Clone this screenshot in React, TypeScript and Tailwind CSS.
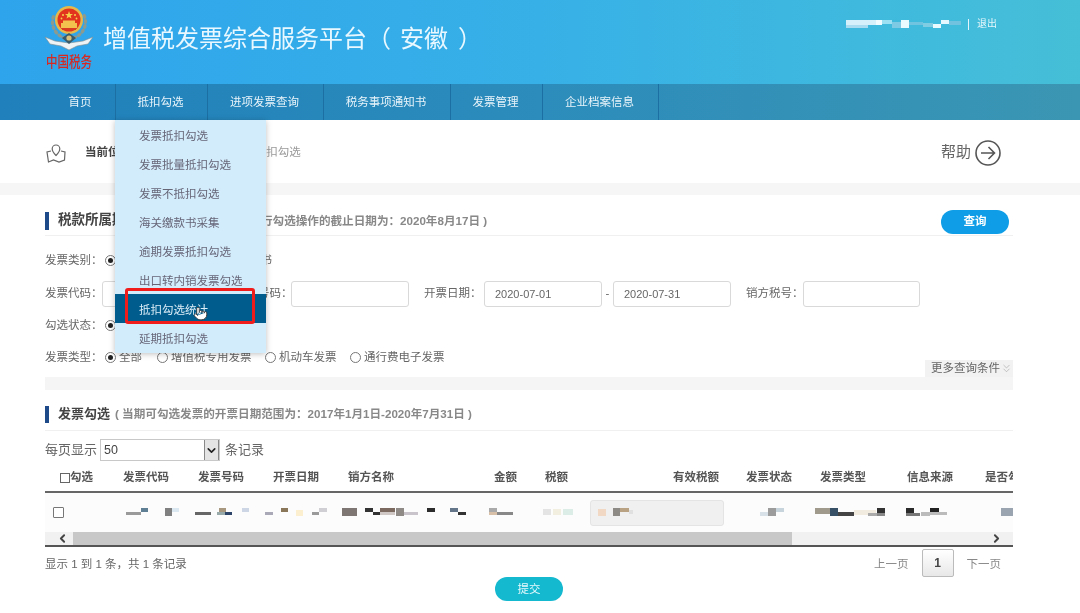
import React from "react";
import { Pointer, ChevronDown, ChevronLeft, ChevronRight, ChevronsDown } from "lucide-react";

type Block = [number, number, number, number, string];

function Mosaic({ w, h = 10, blocks, className = "" }: { w: number; h?: number; blocks: Block[]; className?: string }) {
  return (
    <svg width={w} height={h} viewBox={`0 0 ${w} ${h}`} className={"shrink-0 " + className}>
      {blocks.map((b, i) => (
        <rect key={i} x={b[0]} y={b[1]} width={b[2]} height={b[3]} fill={b[4]} />
      ))}
    </svg>
  );
}

function Emblem() {
  const wreath = [];
  for (let a = 70; a <= 290; a += 18) {
    const r = (a * Math.PI) / 180;
    const x = 24 + 16.5 * Math.sin(r);
    const y = 17 - 16.5 * Math.cos(r);
    wreath.push(<ellipse key={a} cx={x} cy={y} rx="2.6" ry="1.7" fill="#8d9a8e" transform={`rotate(${a} ${x} ${y})`} />);
  }
  return (
    <svg width="48" height="46" viewBox="0 0 48 46" className="block">
      {wreath}
      <circle cx="24" cy="15" r="14" fill="#e7b84a" />
      <circle cx="24" cy="15" r="11.5" fill="#e2331f" />
      <polygon points="24,6 25,9 28,9 25.6,10.800 26.500,13.600 24,11.900 21.500,13.600 22.400,10.800 20,9 23,9" fill="#f6d24c" />
      <circle cx="18" cy="10" r="1" fill="#f6d24c" />
      <circle cx="30" cy="10" r="1" fill="#f6d24c" />
      <circle cx="16.500" cy="13.500" r="0.9" fill="#f6d24c" />
      <circle cx="31.500" cy="13.500" r="0.9" fill="#f6d24c" />
      <rect x="16" y="18" width="16" height="5" fill="#f2c14e" />
      <rect x="18" y="15.500" width="12" height="2.500" fill="#f2c14e" />
      <rect x="17" y="23" width="14" height="2" fill="#d83a22" />
      <path d="M24 38 L10 36 L0 32 L5 39 L16 41 L24 45 L32 41 L43 39 L48 32 L38 36 Z" fill="#eef3f5" stroke="#7f8c8f" strokeWidth="0.6" />
      <path d="M17 33 L24 28 L31 33 L24 39 Z" fill="#3a5a6a" />
      <circle cx="24" cy="33" r="2.600" fill="#d9c07a" />
    </svg>
  );
}

function Radio({ on = false }: { on?: boolean }) {
  return (
    <span className="flex h-[11px] w-[11px] shrink-0 items-center justify-center rounded-full border border-[#777] bg-white">
      {on && <span className="h-[5px] w-[5px] rounded-full bg-[#222]" />}
    </span>
  );
}

function Field({ w, value = "" }: { w: string; value?: string }) {
  return (
    <div className={`flex h-[26px] items-center rounded-[3px] border border-[#d9d9d9] bg-white pl-[10px] text-[11px] text-[#666] ${w}`}>{value}</div>
  );
}

const navItems: [string, string][] = [
  ["首页", "w-[71px]"],
  ["抵扣勾选", "w-[92px] pr-[2px]"],
  ["进项发票查询", "w-[116px] pr-[2px]"],
  ["税务事项通知书", "w-[127px] pr-[2px]"],
  ["发票管理", "w-[92px] pr-[2px]"],
  ["企业档案信息", "w-[116px] pr-[2px]"],
];

const menuItems = ["发票抵扣勾选", "发票批量抵扣勾选", "发票不抵扣勾选", "海关缴款书采集", "逾期发票抵扣勾选", "出口转内销发票勾选", "抵扣勾选统计", "延期抵扣勾选"];

const heads: [string, string][] = [
  ["发票代码", "w-[75px]"],
  ["发票号码", "w-[75px]"],
  ["开票日期", "w-[75px]"],
  ["销方名称", "w-[146px]"],
  ["金额", "w-[51px]"],
  ["税额", "w-[128px]"],
  ["有效税额", "w-[73px]"],
  ["发票状态", "w-[74px]"],
  ["发票类型", "w-[87px]"],
  ["信息来源", "w-[78px]"],
  ["是否勾", "w-[30px]"],
];

export default function App() {
  return (
    <div className="relative h-[613px] w-[1080px] overflow-hidden bg-white font-['Liberation_Sans','Noto_Sans_CJK_SC',sans-serif] text-[11.5px] text-[#666] blur-[0.6px]">
      {/* header */}
      <header className="flex h-[84px] items-start bg-gradient-to-r from-[#2ea4ec] via-[#37b0e7] to-[#45bfd7] pl-[45px] pr-[83px]">
        <div className="mt-[5px] flex w-[58px] shrink-0 flex-col">
          <Emblem />
          <span className="mt-[2px] origin-top scale-y-125 whitespace-nowrap pl-[1px] text-[11.5px] font-medium leading-[14px] text-[#d8281f]">中国税务</span>
        </div>
        <h1 className="mt-[20px] whitespace-nowrap font-['Noto_Sans_CJK_SC',sans-serif] text-[24px] font-normal leading-[34px] text-[#e9f8ff]">
          增值税发票综合服务平台（<span className="ml-[9px] mr-[10px]">安徽</span>）
        </h1>
        <div className="ml-auto mt-[17px] flex items-center text-[10px] leading-[14px] text-[#e4f6fb]">
          <Mosaic
            w={115}
            h={9}
            blocks={[
              [0, 0, 30, 5, "#d6f0fb"],
              [0, 5, 22, 3, "#a9dcf1"],
              [30, 0, 6, 5, "#f0fbff"],
              [36, 0, 10, 4, "#9be0f3"],
              [46, 2, 9, 6, "#7dcae5"],
              [55, 0, 8, 8, "#e9fbff"],
              [63, 2, 14, 3, "#71c4e0"],
              [77, 3, 10, 4, "#7fcde2"],
              [87, 4, 8, 4, "#e8fbff"],
              [95, 0, 8, 4, "#e3f9ff"],
              [103, 1, 12, 4, "#71c2df"],
            ]}
          />
          <span className="ml-[7px] mr-[8px] h-[11px] w-px bg-[#e4f6fb]" />
          <span>退出</span>
        </div>
      </header>

      {/* nav */}
      <nav className="flex h-[36px] bg-gradient-to-r from-[#1f80bb] via-[#2c8cbb] to-[#3b96b3] pl-[45px] text-[11.5px] text-[#e8f4fa]">
        {navItems.map(([label, w]) => (
          <div key={label} className={`flex h-full items-center justify-center border-r border-[#1c6fa3] pt-[1px] ${w}`}>
            <span>{label}</span>
          </div>
        ))}
      </nav>

      {/* breadcrumb */}
      <div className="flex h-[63px] items-center pl-[45px] pr-[79px] pt-[2px]">
        <svg width="22" height="22" viewBox="0 0 22 22" fill="none" stroke="#666" strokeWidth="1.2" className="mr-[18px] shrink-0">
          <path d="M6 9 L2 10 L3.500 20 L8.500 18 L14 20 L19.500 18 L20 10 L16 9" />
          <path d="M11 13.500 C8.500 11 7.200 9.300 7.200 6.800 A3.800 3.800 0 0 1 14.800 6.800 C14.800 9.300 13.500 11 11 13.500 Z" />
        </svg>
        <span className="whitespace-nowrap font-bold text-[#444]">当前位置：</span>
        <span className="ml-[17px] whitespace-nowrap text-[#999]">首页 &gt; 抵扣勾选 &gt; 抵扣勾选</span>
        <span className="ml-auto mr-[4px] text-[15px] text-[#666]">帮助</span>
        <svg width="26" height="26" viewBox="0 0 26 26" fill="none" stroke="#555" strokeWidth="1.6" className="shrink-0">
          <circle cx="13" cy="13" r="12" />
          <path d="M6 13 H19 M13.500 7 L19.500 13 L13.500 19" />
        </svg>
      </div>

      <div className="h-[12px] bg-[#f6f6f6]" />

      <main className="pl-[45px] pr-[67px]">
        {/* section 1 */}
        <section>
          <div className="flex h-[41px] items-center border-b border-[#f0f0f0] pt-[11px]">
            <span className="h-[18px] w-[4px] bg-[#1e4a8a]" />
            <span className="ml-[9px] whitespace-nowrap text-[13.5px] font-bold text-[#444]">税款所属期：</span>
            <span className="ml-[6px] whitespace-nowrap text-[11.6px] font-bold text-[#888]">（当前税款所属期可进行勾选操作的截止日期为：2020年8月17日 )</span>
            <button className="ml-auto mr-[4px] mt-[2px] flex h-[24px] w-[68px] items-center justify-center rounded-full bg-[#0e9de6] text-[11.5px] font-bold text-white">查询</button>
          </div>

          <div className="pt-[12px]">
            <div className="flex h-[25px] items-center">
              <span className="w-[60px] whitespace-nowrap">发票类别：</span>
              <Radio on />
              <span className="ml-[3px] whitespace-nowrap">增值税专用发票</span>
              <span className="ml-[1px]"><Radio /></span>
              <span className="ml-[3px] whitespace-nowrap">海关缴款书</span>
            </div>
            <div className="mt-[8px] flex h-[26px] items-center">
              <span className="w-[57px] whitespace-nowrap">发票代码：</span>
              <Field w="w-[117px]" />
              <span className="ml-[15px] w-[57px] whitespace-nowrap pl-[1px]">发票号码：</span>
              <Field w="w-[118px]" />
              <span className="ml-[15px] w-[60px] whitespace-nowrap">开票日期：</span>
              <Field w="w-[118px]" value="2020-07-01" />
              <span className="w-[11px] text-center">-</span>
              <Field w="w-[118px]" value="2020-07-31" />
              <span className="ml-[15px] w-[57px] whitespace-nowrap">销方税号：</span>
              <Field w="w-[117px]" />
            </div>
            <div className="mt-[6px] flex h-[25px] items-center">
              <span className="w-[60px] whitespace-nowrap">勾选状态：</span>
              <Radio on />
              <span className="ml-[3px] whitespace-nowrap">全部</span>
            </div>
            <div className="mt-[7px] flex h-[25px] items-center">
              <span className="w-[60px] whitespace-nowrap">发票类型：</span>
              <Radio on />
              <span className="ml-[3px] w-[38px] whitespace-nowrap">全部</span>
              <Radio />
              <span className="ml-[3px] w-[94px] whitespace-nowrap">增值税专用发票</span>
              <Radio />
              <span className="ml-[3px] w-[71px] whitespace-nowrap">机动车发票</span>
              <Radio />
              <span className="ml-[3px] whitespace-nowrap">通行费电子发票</span>
            </div>
          </div>

          <div className="relative mt-[7px] h-[13px] bg-[#f5f5f5]">
            <div className="absolute bottom-full right-0 flex h-[17px] w-[88px] items-center bg-[#f2f2f2] pl-[6px] text-[#666]">
              <span className="whitespace-nowrap">更多查询条件</span>
              <ChevronsDown size={13} strokeWidth={1} className="shrink-0 text-[#999]" />
            </div>
          </div>
        </section>

        {/* section 2 */}
        <section>
          <div className="flex h-[41px] items-center border-b border-[#f0f0f0] pt-[8px]">
            <span className="h-[17px] w-[4px] bg-[#1e4a8a]" />
            <span className="ml-[9px] whitespace-nowrap text-[13px] font-bold text-[#444]">发票勾选</span>
            <span className="ml-[5px] whitespace-nowrap text-[11.6px] font-bold text-[#888]">( 当期可勾选发票的开票日期范围为：2017年1月1日-2020年7月31日 )</span>
          </div>

          <div className="mt-[8px] flex h-[22px] items-center text-[13px] text-[#666]">
            <span className="w-[55px] whitespace-nowrap">每页显示</span>
            <div className="flex h-[22px] w-[120px] items-center justify-between border border-[#c8c8c8] bg-white pl-[3px] text-[12.5px] text-[#444]">
              <span>50</span>
              <span className="flex h-full w-[15px] items-center justify-center border-x border-[#888] bg-[#e4e4e4]">
                <ChevronDown size={13} strokeWidth={3} className="text-[#222]" />
              </span>
            </div>
            <span className="ml-[5px] whitespace-nowrap">条记录</span>
          </div>

          <div className="flex h-[32px] items-center overflow-hidden border-b-2 border-[#666] pt-[3px] font-bold text-[#555]">
            <div className="flex w-[78px] shrink-0 items-center pl-[15px]">
              <span className="h-[10px] w-[10px] border border-[#666] bg-white" />
              <span className="whitespace-nowrap">勾选</span>
            </div>
            {heads.map(([h, w]) => (
              <div key={h} className={`shrink-0 whitespace-nowrap ${w}`}>{h}</div>
            ))}
          </div>

          <div className="flex h-[39px] items-center overflow-hidden bg-[#fcfcfc]">
            <span className="ml-[8px] h-[11px] w-[11px] shrink-0 rounded-[1px] border border-[#777] bg-white" />
            <Mosaic w={55} className="ml-[61px]" blocks={[[1, 4, 15, 3, "#9a9a9a"], [16, 0, 7, 4, "#5f7f95"], [40, 0, 7, 8, "#808080"], [47, 0, 7, 4, "#dbe8f2"]]} />
            <Mosaic w={55} className="ml-[15px]" blocks={[[0, 4, 16, 3, "#666"], [24, 0, 7, 4, "#a89880"], [22, 4, 8, 3, "#9aa"], [30, 4, 7, 3, "#2b4468"], [47, 0, 7, 4, "#ccd6e4"]]} />
            <Mosaic w={63} className="ml-[15px]" blocks={[[0, 4, 8, 3, "#a9a9b8"], [16, 0, 7, 4, "#8a7658"], [31, 2, 7, 6, "#fbefd0"], [47, 4, 7, 3, "#9a9a9a"], [54, 0, 8, 4, "#d0d0d4"]]} />
            <Mosaic w={126} className="ml-[14px]" blocks={[[0, 0, 15, 8, "#7d7672"], [23, 0, 8, 4, "#333"], [31, 4, 7, 3, "#333"], [38, 0, 15, 4, "#7c6a60"], [38, 4, 15, 3, "#cfc8c4"], [54, 0, 8, 8, "#8f8a86"], [62, 4, 14, 3, "#c9c4cc"], [85, 0, 8, 4, "#2c2c2c"], [108, 0, 8, 4, "#64778a"], [116, 4, 8, 3, "#333"]]} />
            <Mosaic w={34} className="ml-[20px]" blocks={[[1, 0, 8, 4, "#aaa"], [1, 4, 8, 3, "#d8bfa8"], [9, 4, 16, 3, "#888"]]} />
            <Mosaic w={32} className="ml-[21px]" blocks={[[0, 1, 8, 6, "#e4e4e4"], [10, 1, 8, 6, "#f3efe0"], [20, 1, 10, 6, "#dcece6"]]} />
            <div className="ml-[15px] flex h-[26px] w-[134px] shrink-0 items-center rounded-[3px] border border-[#e4e4e4] bg-[#f0f0f0] pl-[7px]">
              <Mosaic w={36} blocks={[[0, 1, 8, 7, "#f0d8c4"], [15, 0, 7, 8, "#8d8a86"], [22, 0, 9, 4, "#b9a184"], [31, 2, 4, 4, "#e0e0e0"]]} />
            </div>
            <Mosaic w={25} className="ml-[36px]" blocks={[[0, 4, 8, 4, "#d8e0e8"], [8, 0, 8, 8, "#9c9c9c"], [16, 0, 8, 4, "#c8d4dc"]]} />
            <Mosaic w={76} className="ml-[30px]" blocks={[[0, 0, 15, 6, "#a09a8c"], [15, 0, 8, 8, "#375066"], [23, 4, 16, 4, "#444"], [39, 2, 22, 5, "#f0eadf"], [53, 5, 9, 3, "#aaa"], [62, 0, 8, 5, "#333"], [62, 5, 8, 3, "#888"]]} />
            <Mosaic w={42} className="ml-[15px]" blocks={[[0, 0, 8, 5, "#2a2a2a"], [0, 5, 14, 3, "#777"], [15, 4, 9, 4, "#bbb"], [24, 0, 9, 4, "#222"], [24, 4, 17, 3, "#bbb"]]} />
            <Mosaic w={13} className="ml-[53px]" blocks={[[0, 0, 13, 8, "#9aa4b0"]]} />
          </div>

          <div className="flex h-[15px] border-b-2 border-[#555] bg-[#f1f1f1]">
            <div className="flex w-[28px] items-center justify-center pl-[6px]">
              <ChevronLeft size={13} strokeWidth={3.5} className="text-[#444]" />
            </div>
            <div className="w-[719px] bg-[#c8c8c8]" />
            <div className="ml-auto flex w-[28px] items-center justify-center pr-[6px]">
              <ChevronRight size={13} strokeWidth={3.5} className="text-[#444]" />
            </div>
          </div>

          <div className="flex h-[30px] items-start pt-[2px]">
            <span className="mt-[7px] whitespace-nowrap">显示 1 到 1 条，共 1 条记录</span>
            <div className="ml-auto mr-[12px] flex items-center">
              <span className="whitespace-nowrap pt-[3px] text-[#888]">上一页</span>
              <span className="mx-[13px] flex h-[28px] w-[32px] items-center justify-center rounded-[2px] border border-[#bbb] bg-gradient-to-b from-white to-[#e8e8e8] text-[12px] font-bold text-[#444]">1</span>
              <span className="whitespace-nowrap pt-[3px] text-[#888]">下一页</span>
            </div>
          </div>

          <div className="flex justify-center">
            <button className="flex h-[24px] w-[68px] items-center justify-center rounded-full bg-[#14b8cf] pt-[1px] text-[#e6fafd]">提交</button>
          </div>
        </section>
      </main>

      {/* dropdown menu */}
      <div className="absolute left-[115px] top-[120px] w-[151px] bg-[#d3ecfc] pb-[1px] shadow-[0_1px_6px_rgba(0,0,0,0.25)]">
        {menuItems.map((m, i) => (
          <div key={m} className={`flex h-[29px] items-center whitespace-nowrap pl-[24px] pt-[5px] ${i === 6 ? "bg-[#005c8d] text-[#dceef8]" : "text-[#667]"}`}>{m}</div>
        ))}
      </div>
      {/* highlight rectangle */}
      <div className="absolute left-[125px] top-[288px] h-[36px] w-[130px] rounded-[3px] border-[3px] border-[#f01c1c]" />
      <Pointer size={15} strokeWidth={1.4} className="absolute left-[193px] top-[306px] fill-white text-[#333]" />
    </div>
  );
}
